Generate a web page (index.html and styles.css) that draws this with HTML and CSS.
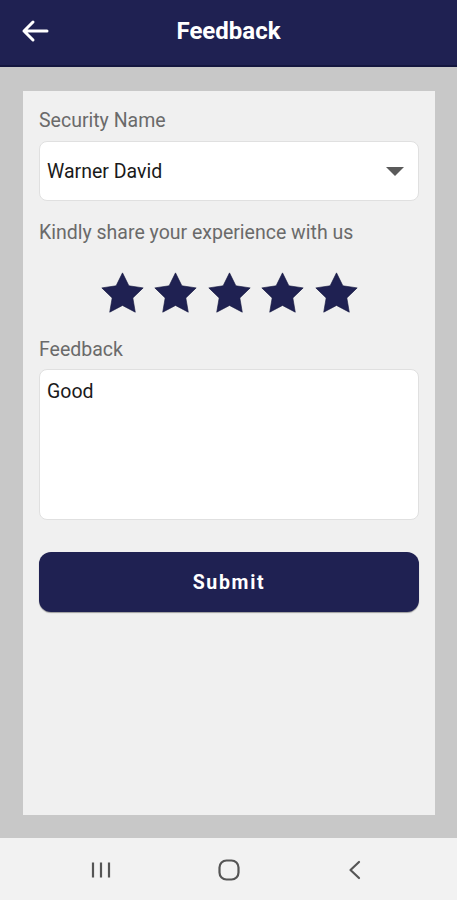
FILE: index.html
```html
<!DOCTYPE html>
<html lang="en">
<head>
<meta charset="utf-8">
<title>Feedback</title>
<link rel="stylesheet" href="styles.css">
</head>
<body>
<div class="screen">
  <header class="appbar">
    <svg class="back" width="28" height="24" viewBox="0 0 28 24" aria-hidden="true">
      <path d="M26 12H3M12 3L3 12l9 9" fill="none" stroke="#fff" stroke-width="3" stroke-linecap="round" stroke-linejoin="round"/>
    </svg>
    <h1 class="title">Feedback</h1>
  </header>
  <main class="content">
    <section class="card">
      <label class="label">Security Name</label>
      <div class="field select">
        <span class="value">Warner David</span>
        <svg class="caret" width="18" height="10" viewBox="0 0 18 10" aria-hidden="true"><path d="M0 0h18L9 9z" fill="#5a5a5a"/></svg>
      </div>
      <p class="label prompt">Kindly share your experience with us</p>
      <div class="stars">
        <svg class="star" viewBox="1.6 1.6 20.8 19.8" aria-hidden="true"><path d="M12 2l3.09 6.26L22 9.27l-5 4.87 1.18 6.88L12 17.77l-6.18 3.25L7 14.14 2 9.27l6.91-1.01L12 2z"/></svg>
        <svg class="star" viewBox="1.6 1.6 20.8 19.8" aria-hidden="true"><path d="M12 2l3.09 6.26L22 9.27l-5 4.87 1.18 6.88L12 17.77l-6.18 3.25L7 14.14 2 9.27l6.91-1.01L12 2z"/></svg>
        <svg class="star" viewBox="1.6 1.6 20.8 19.8" aria-hidden="true"><path d="M12 2l3.09 6.26L22 9.27l-5 4.87 1.18 6.88L12 17.77l-6.18 3.25L7 14.14 2 9.27l6.91-1.01L12 2z"/></svg>
        <svg class="star" viewBox="1.6 1.6 20.8 19.8" aria-hidden="true"><path d="M12 2l3.09 6.26L22 9.27l-5 4.87 1.18 6.88L12 17.77l-6.18 3.25L7 14.14 2 9.27l6.91-1.01L12 2z"/></svg>
        <svg class="star" viewBox="1.6 1.6 20.8 19.8" aria-hidden="true"><path d="M12 2l3.09 6.26L22 9.27l-5 4.87 1.18 6.88L12 17.77l-6.18 3.25L7 14.14 2 9.27l6.91-1.01L12 2z"/></svg>
      </div>
      <label class="label fb-label">Feedback</label>
      <div class="field textarea">Good</div>
      <button class="submit" type="button">Submit</button>
    </section>
  </main>
  <nav class="navbar">
    <svg class="nav-icon" width="20" height="20" viewBox="0 0 20 20" aria-hidden="true">
      <path d="M2 2.5v15M10 2.5v15M18 2.5v15" stroke="#555" stroke-width="2.2" fill="none"/>
    </svg>
    <svg class="nav-icon" width="22" height="22" viewBox="0 0 22 22" aria-hidden="true">
      <rect x="1.5" y="1.5" width="19" height="19" rx="7" fill="none" stroke="#555" stroke-width="2.2"/>
    </svg>
    <svg class="nav-icon" width="20" height="20" viewBox="0 0 20 20" aria-hidden="true">
      <path d="M12 2l-8.5 8L12 18" stroke="#555" stroke-width="2.2" fill="none" stroke-linecap="round" stroke-linejoin="round"/>
    </svg>
  </nav>
</div>
</body>
</html>
```

FILE: styles.css
```css
* { box-sizing: border-box; }
html, body { margin: 0; padding: 0; }
body {
  font-family: Roboto, "Liberation Sans", Arial, sans-serif;
  background: #c8c8c8;
}
.screen {
  width: 457px;
  height: 900px;
  display: flex;
  flex-direction: column;
}
.appbar {
  height: 67px;
  flex: none;
  background: #1f2152;
  border-bottom: 2px solid #14163f;
  display: flex;
  align-items: center;
  position: relative;
}
.back {
  margin-left: 21px;
  margin-top: -4px;
}
.title {
  position: absolute;
  left: 0;
  right: 0;
  top: 17px;
  margin: 0;
  text-align: center;
  color: #fff;
  font-size: 24px;
  font-weight: 700;
  line-height: 28px;
  pointer-events: none;
}
.content {
  flex: 1;
  background: #c8c8c8;
  padding: 24px 22px 23px 23px;
  display: flex;
}
.card {
  flex: 1;
  background: #f0f0f0;
  padding: 20px 16px 0 16px;
  display: flex;
  flex-direction: column;
}
.label {
  display: block;
  margin: 0;
  font-size: 19.5px;
  line-height: 20px;
  color: #6a6a6a;
}
.field {
  background: #fff;
  border: 1px solid #e0e0e0;
  border-radius: 8px;
  font-size: 19.5px;
  line-height: 20px;
  color: #1a1a1a;
}
.select {
  margin-top: 10px;
  height: 60px;
  display: flex;
  align-items: center;
  justify-content: space-between;
  padding: 2px 14px 0 7px;
}
.caret { margin-top: -1px; }
.prompt { margin-top: 22px; }
.stars {
  margin-top: 29px;
  display: flex;
  justify-content: center;
  gap: 10.5px;
}
.star {
  width: 43px;
  height: 41px;
  fill: #1f2152;
  stroke: #141640;
  stroke-width: 0.3;
}
.fb-label { margin-top: 27px; }
.textarea {
  margin-top: 9px;
  height: 151px;
  padding: 12px 7px;
}
.submit {
  margin-top: 32px;
  height: 60px;
  border: none;
  border-radius: 12px;
  background: #1f2152;
  box-shadow: 0 1px 1px rgba(0,0,0,0.35);
  color: #fff;
  font-family: Roboto, "Liberation Sans", Arial, sans-serif;
  font-size: 19.5px;
  font-weight: 700;
  letter-spacing: 1.7px;
}
.navbar {
  height: 62px;
  flex: none;
  background: #f2f2f2;
  display: flex;
  align-items: center;
  justify-content: center;
  gap: 107px;
  padding-top: 1px;
}
```
